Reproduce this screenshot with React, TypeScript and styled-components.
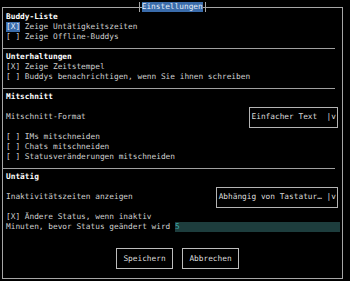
import React from 'react';
import styled, { createGlobalStyle } from 'styled-components';

const GlobalStyle = createGlobalStyle`
  html, body {
    margin: 0;
    background-color: #000000;
  }
  body {
    font-family: 'DejaVu Sans Mono', 'Liberation Mono', monospace;
    font-size: 7.8px;
    line-height: 10px;
    color: #cfcfcf;
  }
`;

const Screen = styled.div`
  width: 350px;
  height: 281px;
  box-sizing: border-box;
  padding: 7px 0 0 2px;
  background-color: #000000;
  overflow: hidden;
`;

const Window = styled.div`
  position: relative;
  width: 341px;
  height: 272px;
  box-sizing: border-box;
  border: 1px solid #a6a6a6;
  padding: 4px 4px 0 3px;
  display: flex;
  flex-direction: column;
`;

const TitleBar = styled.div`
  position: absolute;
  top: -6px;
  left: 134px;
  height: 10px;
  display: flex;
  align-items: stretch;
`;

const Tee = styled.span`
  width: 4.7px;
  display: flex;
  justify-content: center;
  &::before {
    content: '';
    width: 1px;
    background-color: #a6a6a6;
  }
`;

const TitleText = styled.span`
  background-color: #3a6cab;
  color: #e6eef8;
  white-space: pre;
`;

const Row = styled.div`
  height: 10px;
  display: flex;
  align-items: center;
  white-space: pre;
`;

const Heading = styled(Row)`
  font-weight: bold;
  color: #ffffff;
`;

const Blank = styled.div`
  height: 10px;
`;

const Mark = styled.span<{ $focused?: boolean }>`
  background-color: ${(p) => (p.$focused ? '#3a6cab' : 'transparent')};
  color: ${(p) => (p.$focused ? '#e6eef8' : 'inherit')};
`;

const Rule = styled.div`
  height: 10px;
  margin: 0 3px 0 -3px;
  box-sizing: border-box;
  padding-top: 6px;
  &::before {
    content: '';
    display: block;
    height: 1px;
    background-color: #a0a0a0;
  }
`;

const SelectRow = styled.div`
  height: 30px;
  display: flex;
  align-items: center;
  justify-content: space-between;
  white-space: pre;
`;

const Select = styled.div`
  height: 21px;
  box-sizing: border-box;
  border: 1px solid #b4b4b4;
  padding: 0 1px 0 2px;
  display: flex;
  align-items: center;
  white-space: pre;
  color: #dcdcdc;
`;

const Field = styled.span`
  flex: 1;
  height: 10px;
  margin-right: -2px;
  background-color: #1d3d3d;
  color: #39a7a7;
`;

const ButtonRow = styled.div`
  height: 30px;
  box-sizing: border-box;
  padding: 6px 0 0 110px;
  display: flex;
  align-items: flex-start;
  gap: 9px;
`;

const Button = styled.div`
  width: 57px;
  height: 21px;
  box-sizing: border-box;
  border: 1px solid #bdbdbd;
  display: flex;
  align-items: center;
  justify-content: center;
  white-space: pre;
  color: #dcdcdc;
`;

const Check = ({ checked, focused, label }: { checked: boolean; focused?: boolean; label: string }) => (
  <Row>
    <Mark $focused={focused}>{checked ? '[X]' : '[ ]'}</Mark>
    {' ' + label}
  </Row>
);

const App = () => (
  <Screen>
    <GlobalStyle />
    <Window>
      <TitleBar>
        <Tee />
        <TitleText>Einstellungen</TitleText>
        <Tee />
      </TitleBar>

      <Heading>Buddy-Liste</Heading>
      <Check checked focused label="Zeige Untätigkeitszeiten" />
      <Check checked={false} label="Zeige Offline-Buddys" />
      <Rule />

      <Heading>Unterhaltungen</Heading>
      <Check checked label="Zeige Zeitstempel" />
      <Check checked={false} label="Buddys benachrichtigen, wenn Sie ihnen schreiben" />
      <Rule />

      <Heading>Mitschnitt</Heading>
      <SelectRow>
        <span>Mitschnitt-Format</span>
        <Select>Einfacher Text  |v</Select>
      </SelectRow>
      <Check checked={false} label="IMs mitschneiden" />
      <Check checked={false} label="Chats mitschneiden" />
      <Check checked={false} label="Statusveränderungen mitschneiden" />
      <Rule />

      <Heading>Untätig</Heading>
      <SelectRow>
        <span>Inaktivitätszeiten anzeigen</span>
        <Select>Abhängig von Tastatur… |v</Select>
      </SelectRow>
      <Check checked label="Ändere Status, wenn inaktiv" />
      <Row>
        {'Minuten, bevor Status geändert wird '}
        <Field>5</Field>
      </Row>
      <Blank />

      <ButtonRow>
        <Button>Speichern</Button>
        <Button>Abbrechen</Button>
      </ButtonRow>
    </Window>
  </Screen>
);

export default App;
